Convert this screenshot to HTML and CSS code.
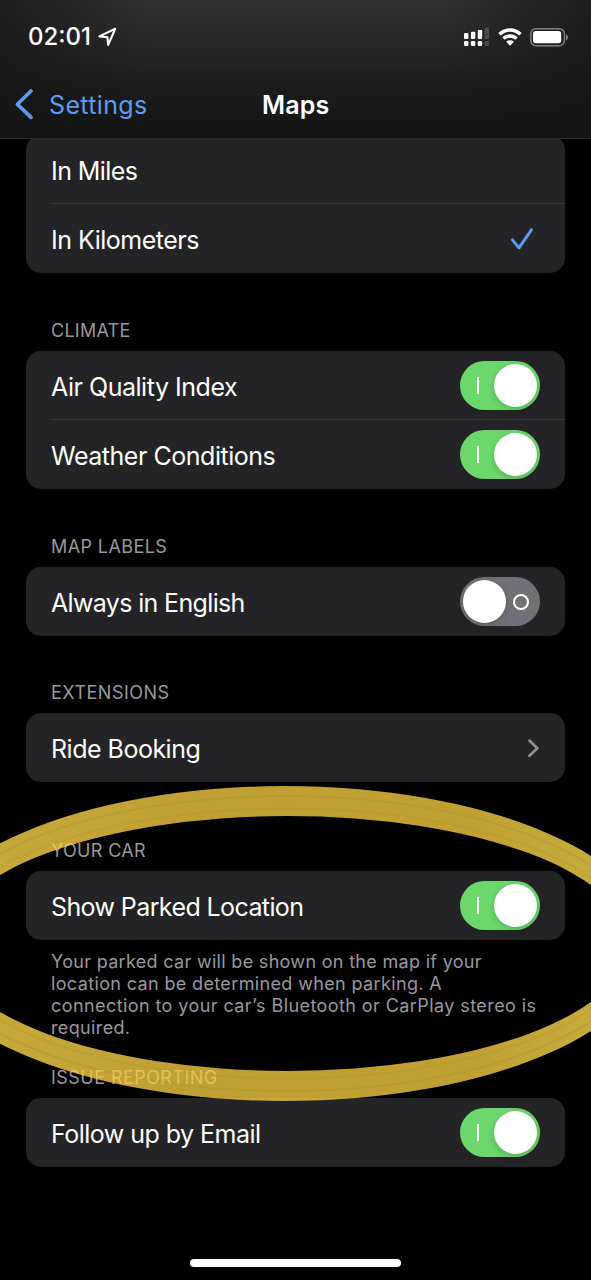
FILE: index.html
```html
<!DOCTYPE html>
<html lang="en">
<head>
<meta charset="utf-8">
<title>Maps</title>
<link rel="stylesheet" href="styles.css">
</head>
<body>
<div class="screen">
  <header class="top">
    <div class="status">
      <span class="time">02:01</span>
      <svg class="loc" width="20" height="20" viewBox="0 0 20 20"><path d="M1.4 9.4 17.2 1.8 10.2 17.8 9.4 10.2Z" fill="none" stroke="#fff" stroke-width="2.1" stroke-linejoin="round"/></svg>
      <svg class="signal" width="26" height="20" viewBox="0 0 26 20">
        <g fill="#fff"><rect x="0" y="6" width="4.4" height="6" rx="1"/><rect x="6.9" y="4.8" width="4.4" height="7.2" rx="1"/><rect x="13.8" y="3" width="4.4" height="9" rx="1"/><rect x="0" y="14" width="4.4" height="5" rx="1.2"/><rect x="6.9" y="14" width="4.4" height="5" rx="1.2"/><rect x="13.8" y="14" width="4.4" height="5" rx="1.2"/></g>
        <g fill="#4b4b4d"><rect x="20.7" y="0.5" width="4.4" height="11.5" rx="1"/><rect x="20.7" y="14" width="4.4" height="5" rx="1.2"/></g>
      </svg>
      <svg class="wifi" width="24" height="18" viewBox="0 0 24 18">
        <g fill="none" stroke="#fff" stroke-width="3.4"><path d="M1.5 6.3A15 15 0 0 1 22.5 6.3"/><path d="M5.5 10.6A9.3 9.3 0 0 1 18.5 10.6"/></g>
        <path d="M8.2 13.8A5.6 5.6 0 0 1 15.8 13.8L12 17.7Z" fill="#fff"/>
      </svg>
      <svg class="battery" width="39" height="19" viewBox="0 0 39 19"><rect x=".8" y=".8" width="33.6" height="17" rx="5" fill="none" stroke="#818183" stroke-width="1.5"/><rect x="3" y="3.1" width="28.2" height="12.2" rx="2.8" fill="#fff"/><path d="M36 6.2A3.4 3.4 0 0 1 36 12.4Z" fill="#818183"/></svg>
    </div>
    <div class="nav">
      <svg class="back" width="20" height="32" viewBox="0 0 20 32"><path d="M16 3 2.4 16.2 16 29.4" fill="none" stroke="#5e9cf3" stroke-width="3.6" stroke-linecap="round" stroke-linejoin="round"/></svg>
      <a class="back-label">Settings</a>
      <h1 class="title">Maps</h1>
    </div>
  </header>
  <main class="content">
    <section class="card first">
      <div class="row"><span class="label miles">In Miles</span></div>
      <div class="row"><span class="label kilometers">In Kilometers</span>
        <svg class="check" width="24" height="24" viewBox="0 0 24 24"><path d="M2.4 12.9 9 20.9 21.4 2.8" fill="none" stroke="#5e9cf3" stroke-width="3" stroke-linecap="round" stroke-linejoin="round"/></svg></div>
    </section>
    <h2 class="heading climate">CLIMATE</h2>
    <section class="card">
      <div class="row"><span class="label air">Air Quality Index</span><span class="switch on"><i class="mark"></i><i class="knob"></i></span></div>
      <div class="row"><span class="label weather">Weather Conditions</span><span class="switch on"><i class="mark"></i><i class="knob"></i></span></div>
    </section>
    <h2 class="heading labels">MAP LABELS</h2>
    <section class="card">
      <div class="row"><span class="label english">Always in English</span><span class="switch off"><i class="knob"></i><i class="ring"></i></span></div>
    </section>
    <h2 class="heading extensions">EXTENSIONS</h2>
    <section class="card">
      <div class="row"><span class="label ride">Ride Booking</span>
        <svg class="chevron" width="14" height="20" viewBox="0 0 14 20"><path d="M3.4 2.6 11.4 10.2 3.4 17.8" fill="none" stroke="#8f8f94" stroke-width="2.7" stroke-linecap="round" stroke-linejoin="round"/></svg></div>
    </section>
    <h2 class="heading car">YOUR CAR</h2>
    <section class="card">
      <div class="row"><span class="label parked">Show Parked Location</span><span class="switch on"><i class="mark"></i><i class="knob"></i></span></div>
    </section>
    <p class="note"><span class="n1">Your parked car will be shown on the map if your</span><br><span class="n2">location can be determined when parking. A</span><br><span class="n3">connection to your car’s Bluetooth or CarPlay stereo is</span><br><span class="n4">required.</span></p>
    <h2 class="heading issue">ISSUE REPORTING</h2>
    <section class="card">
      <div class="row"><span class="label email">Follow up by Email</span><span class="switch on"><i class="mark"></i><i class="knob"></i></span></div>
    </section>
  </main>
  <div class="home"></div>
  <svg class="highlight" width="591" height="340" viewBox="0 770 591 340">
    <defs>
      <linearGradient id="gold" x1="0" x2="591" y1="0" y2="0" gradientUnits="userSpaceOnUse"><stop offset="0" stop-color="#ffd84a"/><stop offset=".3" stop-color="#f7ce42"/><stop offset=".8" stop-color="#f7ce42"/><stop offset="1" stop-color="#ffdc4c"/></linearGradient>
      <filter id="soft" x="-5%" y="-5%" width="110%" height="110%"><feGaussianBlur stdDeviation=".7"/></filter>
    </defs>
    <g opacity=".78" fill="none" filter="url(#soft)">
      <path fill="url(#gold)" fill-rule="evenodd" d="M-84.1 943.5A368.6 157.5 0 0 1 653.1 943.5A368.6 157.5 0 0 1 -84.1 943.5ZM-53.4 943.5A341.2 127.5 0 0 0 629 943.5A341.2 127.5 0 0 0 -53.4 943.5Z"/>
      <ellipse cx="285.5" cy="943.5" rx="360" ry="147.5" stroke="#d9b233" stroke-opacity=".3" stroke-width="2"/>
      <ellipse cx="287" cy="943.5" rx="348" ry="135" stroke="#d9b233" stroke-opacity=".2" stroke-width="2"/>
    </g>
  </svg>
</div>
</body>
</html>
```
FILE: styles.css
```css
* { box-sizing: border-box; }
body { margin: 0; background: #000; font-family: Inter, "Liberation Sans", sans-serif; color: #fff; }
.screen { position: relative; width: 591px; height: 1280px; overflow: hidden; display: flex; flex-direction: column; background: #000; }
.top { height: 139px; flex: none; z-index: 1; border-bottom: 1px solid #2b2b2d;
  background: linear-gradient(90deg, rgba(20,20,20,.65), rgba(20,20,20,0) 25%, rgba(20,20,20,0) 75%, rgba(20,20,20,.65)), linear-gradient(#303032, #272729 35%, #1b1b1c 65%, #141415); }
.status { height: 72px; display: flex; align-items: center; padding: 2px 22px 0 28px; }
.time { font-size: 24px; font-weight: 500; line-height: 30px; letter-spacing: 0; width: 70px; white-space: nowrap; }
.loc { margin-right: auto; }
.signal { margin-right: 8px; }
.wifi { margin-right: 8px; }
.nav { height: 66px; display: grid; grid-template-columns: 34px 213px 1fr; align-items: center; padding: 0 0 2px 15px; }
.back-label { color: #5e9cf3; font-size: 25px; line-height: 32px; letter-spacing: .36px; padding-top: 1px; }
.title { margin: 0; font-size: 25px; font-weight: 600; line-height: 32px; letter-spacing: .15px; padding-top: 1px; }
.content { padding: 0 26px; margin-top: -4px; }
.card { background: #242426; border-radius: 15px; padding-left: 25px; overflow: hidden; }
.row { height: 69px; display: flex; align-items: center; justify-content: space-between; padding-right: 25px; }
.row:not(:last-child) { box-shadow: inset 0 -1px #39393c; }
.label { font-size: 25px; line-height: 34px; padding-top: 2px; white-space: nowrap; }
.miles { letter-spacing: -.56px; }
.kilometers { letter-spacing: -.5px; }
.air, .weather { letter-spacing: -.47px; }
.english { letter-spacing: -.65px; }
.ride { letter-spacing: -.5px; }
.parked { letter-spacing: -.6px; }
.email { letter-spacing: -.53px; }
.heading { margin: 0; height: 78px; padding: 48px 0 0 25px; font-size: 18px; line-height: 20px; font-weight: 400; color: #98989e; white-space: nowrap; }
.climate { letter-spacing: .25px; }
.labels { letter-spacing: .4px; }
.extensions { height: 77px; padding-top: 47px; letter-spacing: .5px; }
.car { height: 89px; padding-top: 59px; letter-spacing: .35px; }
.issue { height: 66px; padding-top: 36px; letter-spacing: .45px; }
.note { margin: 0; padding: 11px 0 0 25px; height: 92px; font-size: 18px; line-height: 22px; color: #98989e; white-space: nowrap; }
.n1 { letter-spacing: .31px; }
.n2, .n4 { letter-spacing: .36px; }
.n3 { letter-spacing: .42px; }
.switch { display: flex; align-items: center; justify-content: space-between; width: 80px; height: 49px; border-radius: 25px; padding: 0 3px; }
.on { background: #6bd76c; padding-left: 17px; }
.off { background: #707077; padding-right: 11px; }
.knob { width: 43px; height: 43px; border-radius: 50%; background: #fff; box-shadow: 0 2px 6px rgba(0,0,0,.2); }
.mark { width: 2px; height: 17px; background: #fff; }
.ring { width: 16px; height: 16px; border: 2px solid #fff; border-radius: 50%; }
.check { margin-right: 6px; }
.home { position: absolute; left: 190px; top: 1259px; width: 211px; height: 8px; border-radius: 4px; background: #fff; }
.highlight { position: absolute; left: 0; top: 770px; z-index: 2; }
```
